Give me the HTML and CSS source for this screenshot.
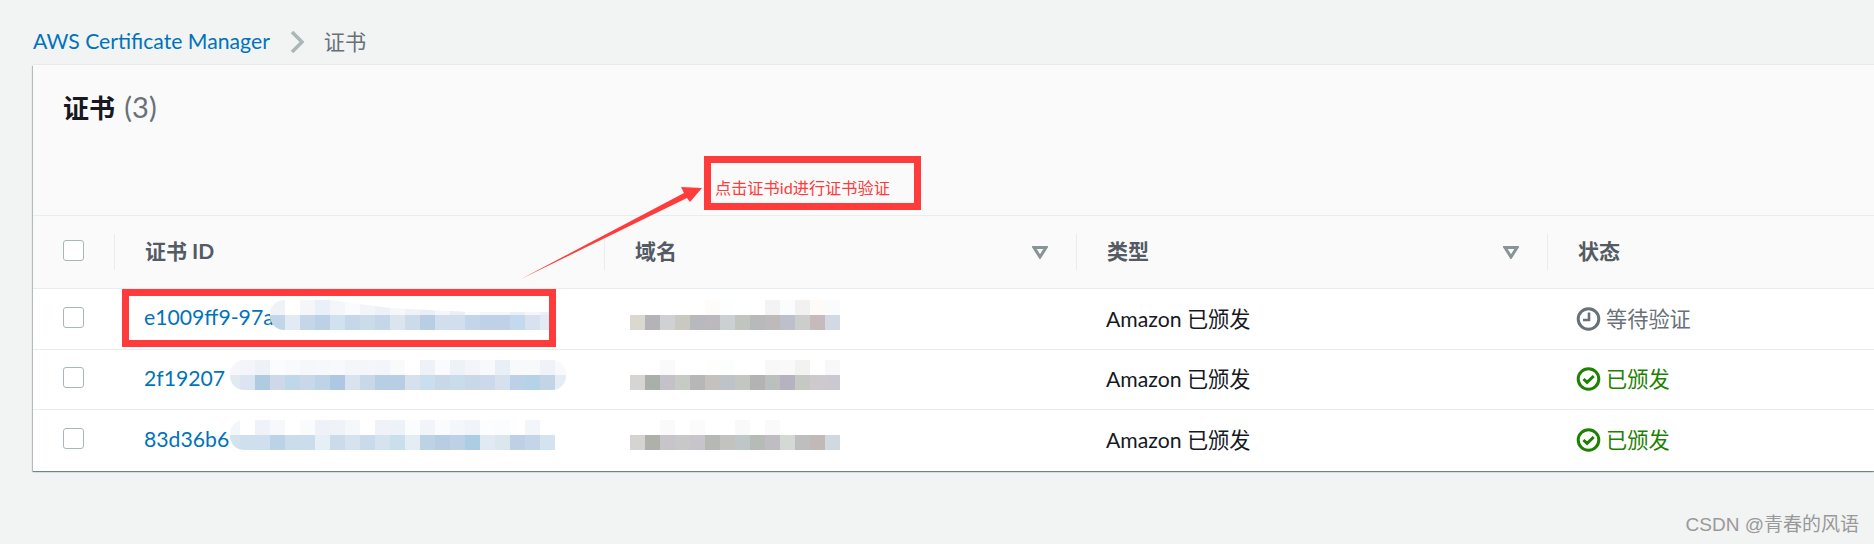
FILE: index.html
```html
<!DOCTYPE html>
<html lang="zh-CN">
<head>
  <meta charset="UTF-8">
  <title>证书 - AWS Certificate Manager</title>
  <link rel="stylesheet" href="styles.css">
</head>
<body>
  <nav class="crumbs">
    <a href="#">AWS Certificate Manager</a>
    <svg class="crumb-sep" width="14" height="22" viewBox="0 0 14 22"><path d="M2 1l10 10L2 21" fill="none" stroke="#aab7b8" stroke-width="3.5"/></svg>
    <span>证书</span>
  </nav>

  <section class="panel">
    <header class="panel-head">
      <h2>证书 <span class="count">(3)</span></h2>
    </header>
    <table class="cert-table">
      <colgroup>
        <col class="col-check"><col class="col-id"><col class="col-domain"><col class="col-type"><col>
      </colgroup>
      <thead>
        <tr>
          <th class="check-cell"><span class="checkbox"></span></th>
          <th><div class="th-inner">证书 ID</div></th>
          <th><div class="th-inner">域名 <svg class="sort" width="16" height="13" viewBox="0 0 16 13"><path d="M2 1.5h12L8 11z" fill="none" stroke="#879596" stroke-width="3"/></svg></div></th>
          <th><div class="th-inner">类型 <svg class="sort" width="16" height="13" viewBox="0 0 16 13"><path d="M2 1.5h12L8 11z" fill="none" stroke="#879596" stroke-width="3"/></svg></div></th>
          <th><div class="th-inner">状态</div></th>
        </tr>
      </thead>
      <tbody>
        <tr>
          <td class="check-cell"><span class="checkbox"></span></td>
          <td><a href="#">e1009ff9-97a</a></td>
          <td></td>
          <td>Amazon 已颁发</td>
          <td>
            <span class="status pending">
              <svg width="25" height="24" viewBox="0 0 25 24"><circle cx="12.5" cy="12" r="10.3" fill="none" stroke="currentColor" stroke-width="3"/><path d="M13 5.5V13H7" fill="none" stroke="currentColor" stroke-width="2.6"/></svg>
              等待验证
            </span>
          </td>
        </tr>
        <tr>
          <td class="check-cell"><span class="checkbox"></span></td>
          <td><a href="#">2f19207</a></td>
          <td></td>
          <td>Amazon 已颁发</td>
          <td>
            <span class="status issued">
              <svg width="25" height="24" viewBox="0 0 25 24"><circle cx="12.5" cy="12" r="10.3" fill="none" stroke="currentColor" stroke-width="3"/><path d="M7.5 12l3.6 3.4 6.6-6.4" fill="none" stroke="currentColor" stroke-width="3"/></svg>
              已颁发
            </span>
          </td>
        </tr>
        <tr>
          <td class="check-cell"><span class="checkbox"></span></td>
          <td><a href="#">83d36b6</a></td>
          <td></td>
          <td>Amazon 已颁发</td>
          <td>
            <span class="status issued">
              <svg width="25" height="24" viewBox="0 0 25 24"><circle cx="12.5" cy="12" r="10.3" fill="none" stroke="currentColor" stroke-width="3"/><path d="M7.5 12l3.6 3.4 6.6-6.4" fill="none" stroke="currentColor" stroke-width="3"/></svg>
              已颁发
            </span>
          </td>
        </tr>
      </tbody>
    </table>
  </section>

  <!-- pixelated parts of the ids and domains -->
  <svg class="mosaic id-1">
    <rect x="0" fill="#eff3f8"/><rect x="15" fill="#ffffff"/><rect x="30" fill="#f4f6fa"/><rect x="45" fill="#eaf0f7"/><rect x="60" fill="#f4f7fa"/><rect x="75" fill="#fafbfd"/><rect x="90" fill="#f2f5f9"/><rect x="105" fill="#eef2f8"/><rect x="120" fill="#f5f7fa"/><rect x="135" fill="#eff3f8"/><rect x="150" fill="#e9eff7"/><rect x="165" fill="#f4f6fa"/><rect x="180" fill="#e9eff7"/><rect x="195" fill="#fafbfd"/><rect x="210" fill="#f4f6fa"/><rect x="225" fill="#f4f6fa"/><rect x="240" fill="#eaf0f7"/><rect x="255" fill="#f4f6fa"/><rect x="270" fill="#eaf0f7"/>
    <polygon points="60,0 285,0 285,12 200,12 120,8" fill="#fff"/>
    <rect x="0" class="lo" fill="#c2d5e9"/><rect x="15" class="lo" fill="#e2eaf3"/><rect x="30" class="lo" fill="#c4d6e8"/><rect x="45" class="lo" fill="#bcd1e6"/><rect x="60" class="lo" fill="#d1e1ef"/><rect x="75" class="lo" fill="#c5d7e8"/><rect x="90" class="lo" fill="#ccdbea"/><rect x="105" class="lo" fill="#c4d6e7"/><rect x="120" class="lo" fill="#dbe5f0"/><rect x="135" class="lo" fill="#ccdbe9"/><rect x="150" class="lo" fill="#b9cee3"/><rect x="165" class="lo" fill="#d0deed"/><rect x="180" class="lo" fill="#d0deed"/><rect x="195" class="lo" fill="#c2d5e9"/><rect x="210" class="lo" fill="#bfd1e6"/><rect x="225" class="lo" fill="#bfd1e6"/><rect x="240" class="lo" fill="#c5d9ee"/><rect x="255" class="lo" fill="#d7e2ee"/><rect x="270" class="lo" fill="#e2eaf4"/>
  </svg>
  <svg class="mosaic id-2">
    <rect x="-5" fill="#f5f7fa"/><rect x="10" fill="#f3f5fa"/><rect x="25" fill="#eef2f8"/><rect x="40" fill="#fbfcfe"/><rect x="55" fill="#f8fafc"/><rect x="70" fill="#f5f7fa"/><rect x="85" fill="#f6f8fb"/><rect x="100" fill="#f8f9fc"/><rect x="115" fill="#f5f6fa"/><rect x="130" fill="#f5f6fa"/><rect x="145" fill="#f2f5f9"/><rect x="160" fill="#f9fafc"/><rect x="175" fill="#ffffff"/><rect x="190" fill="#eef1f6"/><rect x="205" fill="#fafbfe"/><rect x="220" fill="#edf2f8"/><rect x="235" fill="#f3f5f9"/><rect x="250" fill="#f8f9fb"/><rect x="265" fill="#e9eff7"/><rect x="280" fill="#f7f9fb"/><rect x="295" fill="#f7f9fb"/><rect x="310" fill="#eff2f7"/><rect x="325" fill="#f7f9fb"/>
    <rect x="-5" class="lo" fill="#e1eaf3"/><rect x="10" class="lo" fill="#dae5f1"/><rect x="25" class="lo" fill="#afcbe2"/><rect x="40" class="lo" fill="#cdd9e9"/><rect x="55" class="lo" fill="#c0d7ea"/><rect x="70" class="lo" fill="#c9d8e8"/><rect x="85" class="lo" fill="#bed3e6"/><rect x="100" class="lo" fill="#aec8e3"/><rect x="115" class="lo" fill="#d7e3ef"/><rect x="130" class="lo" fill="#c8d8e7"/><rect x="145" class="lo" fill="#b8cee4"/><rect x="160" class="lo" fill="#b8cee4"/><rect x="175" class="lo" fill="#d5e1ec"/><rect x="190" class="lo" fill="#c9dfed"/><rect x="205" class="lo" fill="#c8d8e8"/><rect x="220" class="lo" fill="#c9dcea"/><rect x="235" class="lo" fill="#c8d8e8"/><rect x="250" class="lo" fill="#ccd9ea"/><rect x="265" class="lo" fill="#d7e1ed"/><rect x="280" class="lo" fill="#bcd1e7"/><rect x="295" class="lo" fill="#b5d2e7"/><rect x="310" class="lo" fill="#c3d4e6"/><rect x="325" class="lo" fill="#e3edf4"/>
  </svg>
  <svg class="mosaic id-3">
    <rect x="-5" fill="#f3f6fa"/><rect x="10" fill="#ffffff"/><rect x="25" fill="#eff3f9"/><rect x="40" fill="#f6f8fb"/><rect x="55" fill="#ffffff"/><rect x="70" fill="#fafbfd"/><rect x="85" fill="#eef2f8"/><rect x="100" fill="#eff2f6"/><rect x="115" fill="#f5f8fb"/><rect x="130" fill="#ffffff"/><rect x="145" fill="#eff2f6"/><rect x="160" fill="#ecf2f7"/><rect x="175" fill="#fbfcfe"/><rect x="190" fill="#f1f5f9"/><rect x="205" fill="#fafbfd"/><rect x="220" fill="#f3f6fa"/><rect x="235" fill="#f0f3f7"/><rect x="250" fill="#fcfdfe"/><rect x="265" fill="#fafcfe"/><rect x="280" fill="#ffffff"/><rect x="295" fill="#f2f5fa"/>
    <rect x="-5" class="lo" fill="#d3e2ef"/><rect x="10" class="lo" fill="#cfdfed"/><rect x="25" class="lo" fill="#cfdfed"/><rect x="40" class="lo" fill="#bcd2e7"/><rect x="55" class="lo" fill="#cbdcec"/><rect x="70" class="lo" fill="#cbdcec"/><rect x="85" class="lo" fill="#e6eef6"/><rect x="100" class="lo" fill="#ccdaea"/><rect x="115" class="lo" fill="#d6e3ef"/><rect x="130" class="lo" fill="#c9dbea"/><rect x="145" class="lo" fill="#d5e3ef"/><rect x="160" class="lo" fill="#c9dfeb"/><rect x="175" class="lo" fill="#e4edf4"/><rect x="190" class="lo" fill="#bdd2e4"/><rect x="205" class="lo" fill="#b7cde3"/><rect x="220" class="lo" fill="#bed0e6"/><rect x="235" class="lo" fill="#adcde4"/><rect x="250" class="lo" fill="#e1eaf4"/><rect x="265" class="lo" fill="#dbe6ef"/><rect x="280" class="lo" fill="#bdd0e6"/><rect x="295" class="lo" fill="#c4d5e7"/><rect x="310" class="lo" fill="#d3e3f0"/>
  </svg>
  <svg class="mosaic domain-1">
    <rect x="75" fill="#fdfcfa"/><rect x="90" fill="#fdfefe"/><rect x="135" fill="#f3f3f3"/><rect x="150" fill="#fbfcfd"/><rect x="165" fill="#f1f1f1"/><rect x="180" fill="#fdfaf8"/><rect x="195" fill="#fafbfc"/>
    <rect x="0" class="lo" fill="#dbd8d1"/><rect x="15" class="lo" fill="#b4b3b8"/><rect x="30" class="lo" fill="#d0d1d3"/><rect x="45" class="lo" fill="#c9c9c1"/><rect x="60" class="lo" fill="#b8b9bf"/><rect x="75" class="lo" fill="#bbb9bd"/><rect x="90" class="lo" fill="#cbd1d3"/><rect x="105" class="lo" fill="#c1c5bf"/><rect x="120" class="lo" fill="#b7b9ba"/><rect x="135" class="lo" fill="#bfbaba"/><rect x="150" class="lo" fill="#bdbfca"/><rect x="165" class="lo" fill="#cccecb"/><rect x="180" class="lo" fill="#c7babd"/><rect x="195" class="lo" fill="#d2d9e2"/>
  </svg>
  <svg class="mosaic domain-2">
    <rect x="30" fill="#fafafa"/><rect x="75" fill="#fefefc"/><rect x="90" fill="#fcfefd"/><rect x="135" fill="#f8f8f8"/><rect x="150" fill="#f9f9f9"/><rect x="165" fill="#f2f2f0"/><rect x="195" fill="#f8f8fb"/>
    <rect x="0" class="lo" fill="#d6d5d3"/><rect x="15" class="lo" fill="#abafa9"/><rect x="30" class="lo" fill="#c5c1c8"/><rect x="45" class="lo" fill="#c7cbc6"/><rect x="60" class="lo" fill="#b6b7b6"/><rect x="75" class="lo" fill="#c5c1be"/><rect x="90" class="lo" fill="#bec3c8"/><rect x="105" class="lo" fill="#c3c7c1"/><rect x="120" class="lo" fill="#b3b3b3"/><rect x="135" class="lo" fill="#bbc0be"/><rect x="150" class="lo" fill="#b7b2bf"/><rect x="165" class="lo" fill="#c6c8c3"/><rect x="180" class="lo" fill="#cdc9cd"/><rect x="195" class="lo" fill="#ccc8d0"/>
  </svg>
  <svg class="mosaic domain-3">
    <rect x="30" fill="#fafafa"/><rect x="60" fill="#fbfbfb"/><rect x="105" fill="#f9f9f9"/><rect x="135" fill="#fafafa"/>
    <rect x="0" class="lo" fill="#d5d4d2"/><rect x="15" class="lo" fill="#adb1aa"/><rect x="30" class="lo" fill="#c8c5ca"/><rect x="45" class="lo" fill="#c8c8c8"/><rect x="60" class="lo" fill="#c8c4cb"/><rect x="75" class="lo" fill="#b5b8b3"/><rect x="90" class="lo" fill="#c2c2bf"/><rect x="105" class="lo" fill="#bfc6c8"/><rect x="120" class="lo" fill="#b7bbb7"/><rect x="135" class="lo" fill="#bfbcc2"/><rect x="150" class="lo" fill="#d4d9d6"/><rect x="165" class="lo" fill="#bebebe"/><rect x="180" class="lo" fill="#c1b9b8"/><rect x="195" class="lo" fill="#d0d9e0"/>
  </svg>

  <!-- red annotations drawn on top of the screenshot -->
  <div class="mark mark-id"></div>
  <div class="mark mark-note">点击证书id进行证书验证</div>
  <svg class="arrow" width="182" height="94" viewBox="0 0 182 94"><polygon points="0,93 163,7 160,1 181,2 169,16 166,12" fill="#ff3b3b"/></svg>

  <div class="watermark">CSDN @青春的风语</div>
</body>
</html>
```

FILE: styles.css
```css
body {
  margin: 0;
  height: 544px;
  overflow: hidden;
  position: relative;
  background-color: #f2f3f3;
  color: #16191f;
  font-family: Lato, "Noto Sans CJK SC", sans-serif;
  font-size: 21.2px;
}
a {
  color: #0073bb;
  text-decoration: none;
}

/* breadcrumb */
.crumbs {
  box-sizing: border-box;
  height: 65px;
  padding: 16px 0 0 33px;
  display: flex;
  align-items: center;
  gap: 20px;
  color: #687078;
}
.crumb-sep {
  margin-top: 3px;
}

/* panel */
.panel {
  margin-left: 33px;
  background-color: #fff;
  box-shadow: 0 1px 1px 0 rgba(0, 28, 36, .4), -1px 1px 1px 0 rgba(0, 28, 36, .2), 0 -1px 0 0 #e9ebeb;
}
.panel-head {
  box-sizing: border-box;
  height: 151px;
  padding: 24px 30px;
  background-color: #fafafa;
  border-bottom: 1px solid #eaeded;
}
.panel-head h2 {
  margin: 0;
  font-size: 26px;
  line-height: 36px;
  font-weight: 700;
}
.count {
  margin-left: 3px;
  font-size: 29px;
  font-weight: 400;
  color: #687078;
}

/* table */
.cert-table {
  width: 100%;
  table-layout: fixed;
  border-collapse: separate;
  border-spacing: 0;
}
.col-check { width: 81px; }
.col-id { width: 490px; }
.col-domain { width: 472px; }
.col-type { width: 471px; }
th {
  height: 72px;
  padding: 0;
  background-color: #fafafa;
  border-bottom: 1px solid #eaeded;
  color: #545b64;
  font-size: 21px;
  font-weight: 700;
  text-align: left;
}
.th-inner {
  box-sizing: border-box;
  height: 36px;
  padding: 0 28px 5px 30px;
  border-left: 1px solid #eaeded;
  display: flex;
  align-items: center;
  justify-content: space-between;
}
.sort {
  margin-top: 5px;
}
td {
  height: 56px;
  padding: 0 0 4px 30px;
  border-bottom: 1px solid #eaeded;
}
tbody tr:nth-child(2) td { height: 55px; }
tbody tr:last-child td { height: 57px; border-bottom: none; }
.cert-table th.check-cell { height: 69px; padding: 0 0 3px 30px; }
.checkbox {
  box-sizing: border-box;
  display: block;
  width: 21px;
  height: 21px;
  background-color: #fff;
  border: 1px solid #aab7b8;
  border-radius: 3px;
}
.status {
  margin-left: -1px;
  display: flex;
  align-items: center;
  gap: 5px;
}
.status svg {
  margin-top: 3px;
}
.pending { color: #687078; }
.issued { color: #1d8102; }

/* pixelated text */
.mosaic {
  position: absolute;
  height: 30px;
}
.mosaic rect {
  width: 15px;
  height: 15px;
}
.mosaic .lo { y: 15px; }
.id-1 { left: 270px; top: 300px; width: 285px; border-radius: 14px 0 0 14px; }
.id-2 { left: 230px; top: 360px; width: 336px; border-radius: 14px; }
.id-3 { left: 230px; top: 420px; width: 325px; border-radius: 14px 0 0 14px; }
.domain-1 { left: 630px; top: 300px; width: 210px; }
.domain-2 { left: 630px; top: 360px; width: 210px; }
.domain-3 { left: 630px; top: 420px; width: 210px; }

/* annotations */
.mark {
  box-sizing: border-box;
  position: absolute;
  border: 7px solid #ff3b3b;
}
.mark-id {
  left: 122px;
  top: 289px;
  width: 434px;
  height: 58px;
}
.mark-note {
  left: 704px;
  top: 156px;
  width: 217px;
  height: 54px;
  padding: 15px 0 0 4px;
  color: #ff3b3b;
  font-size: 16.2px;
  line-height: 20px;
  white-space: nowrap;
}
.arrow {
  position: absolute;
  left: 521px;
  top: 186px;
}
.watermark {
  position: absolute;
  right: 15px;
  top: 511px;
  color: #999;
  font-family: "Liberation Sans", "Noto Sans CJK SC", sans-serif;
  font-size: 19px;
  line-height: 28px;
  white-space: nowrap;
}
```
